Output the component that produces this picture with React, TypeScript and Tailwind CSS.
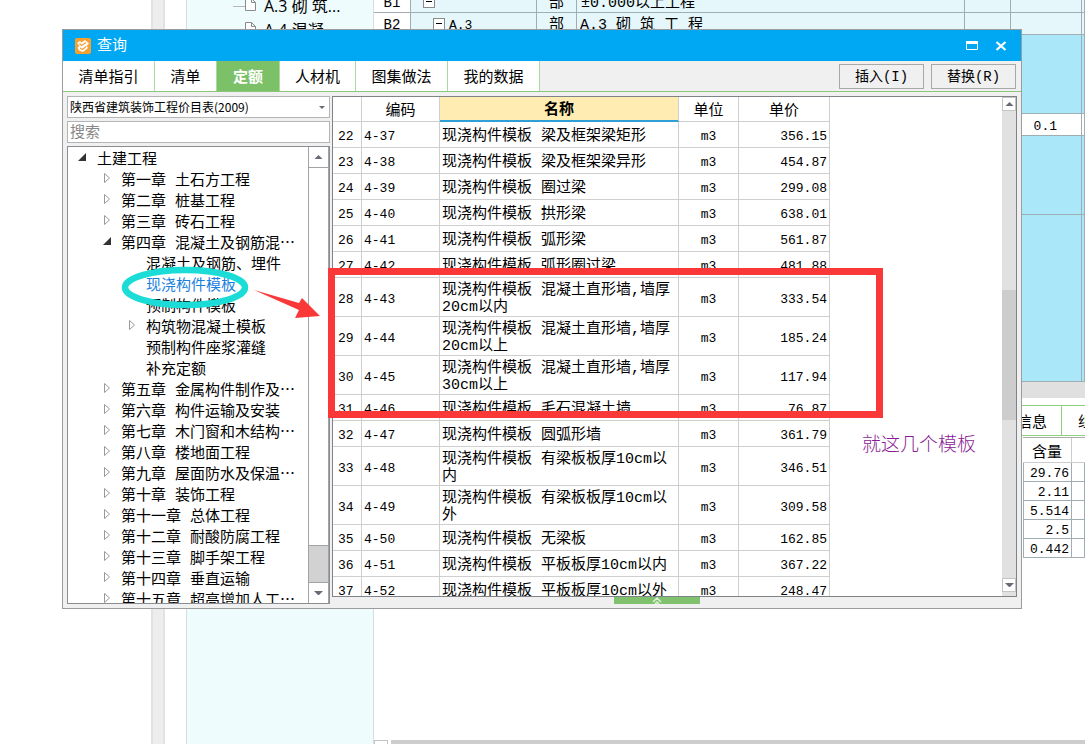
import { ReactNode } from 'react';
import { clsx } from 'clsx';

type NodeState = 'open' | 'closed' | 'leaf';

interface TreeNode {
  label: string;
  level: number;
  state: NodeState;
  active?: boolean;
}

interface QuotaRow {
  no: number;
  code: string;
  name: string;
  price: string;
  tall?: boolean;
}

const tabs = ['清单指引', '清单', '定额', '人材机', '图集做法', '我的数据'];

const tree: TreeNode[] = [
  { label: '土建工程', level: 0, state: 'open' },
  { label: '第一章 土石方工程', level: 1, state: 'closed' },
  { label: '第二章 桩基工程', level: 1, state: 'closed' },
  { label: '第三章 砖石工程', level: 1, state: 'closed' },
  { label: '第四章 混凝土及钢筋混⋯', level: 1, state: 'open' },
  { label: '混凝土及钢筋、埋件', level: 2, state: 'leaf' },
  { label: '现浇构件模板', level: 2, state: 'leaf', active: true },
  { label: '预制构件模板', level: 2, state: 'leaf' },
  { label: '构筑物混凝土模板', level: 2, state: 'closed' },
  { label: '预制构件座浆灌缝', level: 2, state: 'leaf' },
  { label: '补充定额', level: 2, state: 'leaf' },
  { label: '第五章 金属构件制作及⋯', level: 1, state: 'closed' },
  { label: '第六章 构件运输及安装', level: 1, state: 'closed' },
  { label: '第七章 木门窗和木结构⋯', level: 1, state: 'closed' },
  { label: '第八章 楼地面工程', level: 1, state: 'closed' },
  { label: '第九章 屋面防水及保温⋯', level: 1, state: 'closed' },
  { label: '第十章 装饰工程', level: 1, state: 'closed' },
  { label: '第十一章 总体工程', level: 1, state: 'closed' },
  { label: '第十二章 耐酸防腐工程', level: 1, state: 'closed' },
  { label: '第十三章 脚手架工程', level: 1, state: 'closed' },
  { label: '第十四章 垂直运输', level: 1, state: 'closed' },
  { label: '第十五章 超高增加人工⋯', level: 1, state: 'closed' },
];

const rows: QuotaRow[] = [
  { no: 22, code: '4-37', name: '现浇构件模板 梁及框架梁矩形', price: '356.15' },
  { no: 23, code: '4-38', name: '现浇构件模板 梁及框架梁异形', price: '454.87' },
  { no: 24, code: '4-39', name: '现浇构件模板 圈过梁', price: '299.08' },
  { no: 25, code: '4-40', name: '现浇构件模板 拱形梁', price: '638.01' },
  { no: 26, code: '4-41', name: '现浇构件模板 弧形梁', price: '561.87' },
  { no: 27, code: '4-42', name: '现浇构件模板 弧形圈过梁', price: '481.88' },
  { no: 28, code: '4-43', name: '现浇构件模板 混凝土直形墙,墙厚20cm以内', price: '333.54', tall: true },
  { no: 29, code: '4-44', name: '现浇构件模板 混凝土直形墙,墙厚20cm以上', price: '185.24', tall: true },
  { no: 30, code: '4-45', name: '现浇构件模板 混凝土直形墙,墙厚30cm以上', price: '117.94', tall: true },
  { no: 31, code: '4-46', name: '现浇构件模板 毛石混凝土墙', price: '76.87' },
  { no: 32, code: '4-47', name: '现浇构件模板 圆弧形墙', price: '361.79' },
  { no: 33, code: '4-48', name: '现浇构件模板 有梁板板厚10cm以内', price: '346.51', tall: true },
  { no: 34, code: '4-49', name: '现浇构件模板 有梁板板厚10cm以外', price: '309.58', tall: true },
  { no: 35, code: '4-50', name: '现浇构件模板 无梁板', price: '162.85' },
  { no: 36, code: '4-51', name: '现浇构件模板 平板板厚10cm以内', price: '367.22' },
  { no: 37, code: '4-52', name: '现浇构件模板 平板板厚10cm以外', price: '248.47' },
];

const contents = ['29.76', '2.11', '5.514', '2.5', '0.442'];

const Triangle = ({ up, small }: { up?: boolean; small?: boolean }) => (
  <svg viewBox="0 0 10 5" className={small ? 'w-[6px]' : 'w-[9px]'}>
    <path d={up ? 'M0 5 5 0l5 5z' : 'M0 0h10L5 5z'} fill="#666b75" />
  </svg>
);

const Expander = ({ state }: { state: NodeState }) => (
  <svg viewBox="0 0 10 10" className="mb-[4px] w-[10px] h-[10px] shrink-0">
    {state === 'open' && <path d="M9 1v8H1z" fill="#333" />}
    {state === 'closed' && <path d="M2.500.5v9l5-4.500z" fill="none" stroke="#999" />}
  </svg>
);

const MinusBox = () => (
  <span className="flex w-[12px] h-[12px] items-center justify-center border border-[#8a8a8a] bg-white">
    <span className="w-[6px] h-px bg-black" />
  </span>
);

const FileNode = ({ label }: { label: string }) => (
  <div className="flex h-[24px] items-center pl-[46px]">
    <span className="w-[12px] h-px bg-[#b8b8b8]" />
    <svg viewBox="0 0 11 13" className="mb-[4px] w-[11px] h-[13px]">
      <path d="M.5.5h6l4 4v8H.5zM6.500.5v4h4" fill="#fff" stroke="#8a8a8a" />
    </svg>
    <span className="pl-[8px] text-[16px] whitespace-nowrap font-['Open_Sans','Noto_Sans_CJK_SC',sans-serif]">{label}</span>
  </div>
);

const Cell = ({ children, className }: { children?: ReactNode; className?: string }) => (
  <td className={clsx('border-r border-b border-[#a0adb3] py-0', className)}>{children}</td>
);

const Workspace = () => (
  <div className="flex h-full">
    <div className="w-[151px] shrink-0" />
    <div className="w-[14px] shrink-0 border-x-2 border-[#e2e2e2] bg-[#ededed]" />
    <div className="w-[21px] shrink-0" />
    <div className="w-[188px] shrink-0 overflow-hidden border-x border-[#d5dfe2] bg-[#effcfe]">
      <div className="-mt-[6px]">
        <FileNode label="A.3 砌 筑..." />
        <FileNode label="A.4 混凝..." />
      </div>
    </div>
    <div className="flex min-w-0 flex-1 flex-col overflow-hidden">
      <table className="-mt-[9px] w-full shrink-0 table-fixed border-separate border-spacing-0 bg-[#e5f7fb] leading-[17px]">
        <colgroup>
          <col className="w-[37px]" />
          <col className="w-[126px]" />
          <col className="w-[40px]" />
          <col />
          <col className="w-[46px]" />
          <col className="w-[71px]" />
          <col className="w-[3px]" />
        </colgroup>
        <tbody>
          <tr className="h-[22px]">
            <Cell className="bg-white pt-[4px] text-center text-[14px]">B1</Cell>
            <Cell className="pl-[12px]"><MinusBox /></Cell>
            <Cell className="pt-[4px] text-center">部</Cell>
            <Cell className="pt-[4px] pl-[4px]">±0.000以上工程</Cell>
            <Cell /><Cell /><Cell />
          </tr>
          <tr className="h-[22px]">
            <Cell className="bg-white pt-[4px] text-center text-[14px]">B2</Cell>
            <Cell className="pl-[22px]">
              <div className="flex items-center gap-[4px] text-[13px]">
                <MinusBox />
                <span className="pt-[4px]">A.3</span>
              </div>
            </Cell>
            <Cell className="pt-[4px] text-center">部</Cell>
            <Cell className="pt-[4px] pl-[3px] text-[15px]">A.3 砌 筑 工 程</Cell>
            <Cell /><Cell /><Cell />
          </tr>
          <tr className="h-[79px] bg-[#aae7f9]">
            <Cell /><Cell /><Cell /><Cell /><Cell /><Cell /><Cell />
          </tr>
          <tr className="h-[22px] bg-white">
            <Cell /><Cell /><Cell /><Cell /><Cell />
            <Cell className="pt-[4px] pr-[24px] text-right text-[13px]">0.1</Cell>
            <Cell />
          </tr>
          <tr className="h-[79px] bg-[#aae7f9]">
            <Cell /><Cell /><Cell /><Cell /><Cell /><Cell /><Cell />
          </tr>
          <tr className="h-[167px] bg-[#aae7f9]">
            <Cell /><Cell /><Cell /><Cell /><Cell /><Cell /><Cell />
          </tr>
        </tbody>
      </table>
      <div className="h-[16px] shrink-0 bg-[#e0e0e0]" />
      <div className="mt-[7px] flex shrink-0 justify-end">
        <div className="flex h-[31px] w-[85px] items-stretch overflow-hidden border-y border-[#8fcf80] whitespace-nowrap">
          <span className="flex w-[62px] shrink-0 items-center justify-end border-r border-[#8fcf80] pt-[6px] pr-[14px]">信息</span>
          <span className="flex items-center pt-[6px] pl-[16px]">组价</span>
        </div>
      </div>
      <div className="mt-px flex flex-1 justify-end">
        <table className="w-[62px] table-fixed border-separate border-spacing-0 self-start border-t border-[#aaa]">
          <thead>
            <tr className="h-[25px] leading-[17px]">
              <th className="w-[49px] border-r border-b border-[#ccc] px-0 pt-[6px] pb-0 font-normal">含量</th>
              <th className="border-b border-[#ccc] p-0" />
            </tr>
          </thead>
          <tbody>
            {contents.map((value) => (
              <tr key={value} className="h-[19px] text-[13px] leading-[14px]">
                <Cell className="border-l pt-[4px] pr-[2px] pl-0 text-right">{value}</Cell>
                <Cell />
              </tr>
            ))}
          </tbody>
        </table>
      </div>
      <div className="flex h-[4px] shrink-0 gap-[3px]">
        <div className="w-[14px] border border-b-0 border-[#c4c4c4] bg-white" />
        <div className="flex-1 bg-[#cdcdcd]" />
      </div>
    </div>
  </div>
);

const TitleBar = () => (
  <div className="flex h-[31px] shrink-0 items-center bg-[#00a8f3] pr-[14px] pl-[12px] text-white">
    <svg viewBox="0 0 16 16" className="w-[16px] h-[16px]">
      <rect width="16" height="16" rx="2" fill="#f6a030" />
      <path d="M2 5 5 3l1.500 1.500L10 2l4 3.500-2.500 2.500 1.500 2-5 4-4-1.500L2.500 9.500 4.500 8z" fill="#fff" />
      <path d="M4.500 5.500 6.500 7.500 11 4.500M5 10 7.500 11.500l3.500-3" fill="none" stroke="#f6a030" strokeWidth="1.200" />
    </svg>
    <h1 className="flex-1 pt-[2px] pl-[6px]">查询</h1>
    <button aria-label="最大化" className="mr-[17px]">
      <svg viewBox="0 0 12 9" className="w-[12px] h-[9px]">
        <path d="M.5.5h11v8H.5z" fill="none" stroke="#fff" />
        <path d="M0 0h12v3H0z" fill="#fff" />
      </svg>
    </button>
    <button aria-label="关闭">
      <svg viewBox="0 0 12 10" className="w-[12px] h-[10px]">
        <path d="M1.500 1l9 8M10.500 1l-9 8" stroke="#fff" strokeWidth="2.200" />
      </svg>
    </button>
  </div>
);

const TabBar = () => (
  <div className="flex h-[31px] shrink-0 items-stretch border-b border-[#8cc57c]">
    <nav className="flex flex-1">
      {tabs.map((tab) => (
        <button
          key={tab}
          className={clsx(
            'border-r border-[#a9dba0] pt-[6px]',
            tab === '定额' ? 'bg-[#7cc068] font-bold text-white' : 'bg-white',
            tab.length === 2 && (tab === '定额' ? 'w-[63px]' : 'w-[62px]'),
            tab.length === 3 && 'w-[76px]',
            tab.length === 4 && 'w-[92px]'
          )}
        >
          {tab}
        </button>
      ))}
    </nav>
    <div className="flex items-center gap-[7px] pr-[5px] text-[14px]">
      <button className="h-[25px] w-[85px] border border-[#a8a8a8] pt-[2px]">插入(I)</button>
      <button className="h-[25px] w-[85px] border border-[#a8a8a8] pt-[2px]">替换(R)</button>
    </div>
  </div>
);

const Sidebar = () => (
  <aside className="flex w-[263px] shrink-0 flex-col">
    <div className="grid h-[22px] shrink-0 grid-cols-1 items-center border border-[#b5b5b5] bg-white">
      <select
        aria-label="定额库"
        className="col-start-1 row-start-1 w-full appearance-none pl-[2px] text-[12px] leading-[18px] font-['Noto_Sans_CJK_SC',sans-serif]"
      >
        <option>陕西省建筑装饰工程价目表(2009)</option>
      </select>
      <span className="pointer-events-none col-start-1 row-start-1 justify-self-end pr-[4px]"><Triangle small /></span>
    </div>
    <input
      aria-label="搜索"
      placeholder="搜索"
      className="mt-[3px] h-[22px] shrink-0 border border-[#b5b5b5] bg-white px-[2px] pt-[2px] placeholder:text-[#888]"
    />
    <div className="mt-[3px] flex min-h-0 flex-1 border border-[#8a8d92] bg-white">
      <ul className="min-w-0 flex-1 overflow-hidden pt-px">
        {tree.map((node) => (
          <li
            key={node.label}
            className={clsx(
              'flex h-[21px] items-center whitespace-nowrap leading-[17px]',
              node.level === 0 && 'gap-[10px] pl-[9px]',
              node.level === 1 && 'gap-[9px] pl-[34px]',
              node.level === 2 && 'gap-[9px] pl-[59px]',
              node.active && 'text-[#1a80e0]'
            )}
          >
            <Expander state={node.state} />
            <span className="pt-[4px]">{node.label}</span>
          </li>
        ))}
      </ul>
      <div className="flex w-[21px] shrink-0 flex-col border-x border-[#a0a3a8] bg-[#d2d2d2]">
        <button aria-label="向上" className="flex h-[21px] items-center justify-center border-b border-[#a0a3a8] bg-white"><Triangle up /></button>
        <div className="flex-1 border-b border-[#a0a3a8] bg-white" />
        <button aria-label="向下" className="mt-[36px] flex h-[21px] items-center justify-center border-t border-[#a0a3a8] bg-white"><Triangle /></button>
      </div>
    </div>
  </aside>
);

const cell = 'border-r border-b border-[#cfcfcf] px-[2px] pt-[4px] pb-0';

const QuotaTable = () => (
  <div className="flex min-h-0 flex-1 overflow-hidden border border-[#7f8388] bg-white">
    <div className="min-w-0 flex-1 overflow-hidden">
      <table className="w-[497px] table-fixed border-separate border-spacing-0">
        <colgroup>
          <col className="w-[29px]" />
          <col className="w-[78px]" />
          <col className="w-[239px]" />
          <col className="w-[60px]" />
          <col className="w-[91px]" />
        </colgroup>
        <thead>
          <tr className="h-[25px] leading-[17px]">
            <th className={cell} />
            <th className={clsx(cell, 'font-normal')}>编码</th>
            <th className="border-r border-b-2 border-r-[#cfcfcf] border-b-[#2f9fd8] bg-[#ffecb3] px-[2px] pt-[4px] pb-0 font-bold">名称</th>
            <th className={clsx(cell, 'font-normal')}>单位</th>
            <th className={clsx(cell, 'font-normal')}>单价</th>
          </tr>
        </thead>
        <tbody>
          {rows.map((row) => (
            <tr key={row.no} className={clsx('text-[13px] leading-[17px]', row.tall ? 'h-[39px]' : 'h-[26px]')}>
              <td className={clsx(cell, 'pl-[5px]')}>{row.no}</td>
              <td className={cell}>{row.code}</td>
              <td className={clsx(cell, 'text-[15px] leading-[17px]')}>{row.name}</td>
              <td className={clsx(cell, 'text-center')}>m3</td>
              <td className={clsx(cell, 'text-right')}>{row.price}</td>
            </tr>
          ))}
        </tbody>
      </table>
    </div>
    <div className="flex w-[14px] shrink-0 flex-col bg-[#e1e1e1]">
      <button aria-label="向上" className="flex h-[14px] items-center justify-center border border-[#c4c4c4] bg-white"><Triangle up /></button>
      <div className="mt-[179px] h-[130px] bg-[#cdcdcd]" />
      <button aria-label="向下" className="mt-auto mb-[4px] flex h-[14px] items-center justify-center border border-[#c4c4c4] bg-white"><Triangle /></button>
    </div>
  </div>
);

const QueryWindow = () => (
  <section className="absolute top-[29px] right-[63px] bottom-[135px] left-[62px] flex flex-col border border-[#9c9c9c] bg-[#f0f0f0]">
    <TitleBar />
    <TabBar />
    <div className="flex min-h-0 flex-1 gap-[2px] pt-[4px] pr-[4px] pl-[4px]">
      <div className="flex pb-[4px]">
        <Sidebar />
      </div>
      <div className="flex min-w-0 flex-1 flex-col">
        <QuotaTable />
        <button aria-label="展开" className="mb-[4px] ml-[282px] flex h-[7px] w-[86px] items-center justify-center bg-[#7fc16c]">
          <svg viewBox="0 0 10 7" className="w-[10px] h-[7px]">
            <path d="M1 5l4-4 4 4M3 7l2-2 2 2" fill="none" stroke="#dff3d8" strokeWidth="1.500" />
          </svg>
        </button>
      </div>
    </div>
  </section>
);

// Hand-drawn marks laid over the window
const Annotations = () => (
  <>
    <svg viewBox="0 0 210 60" className="pointer-events-none absolute top-[262px] left-[118px] w-[210px] h-[60px]">
      <ellipse cx="67" cy="25.500" rx="60" ry="17.500" fill="none" stroke="#1bdcd6" strokeWidth="6.500" />
      <path d="M136 28 181 41 184 36 202 54 177 56 181 48z" fill="#fb3838" />
    </svg>
    <div className="pointer-events-none absolute top-[268px] left-[328px] h-[150px] w-[555px] border-[7px] border-[#fb3838]" />
    <p className="absolute top-[433px] left-[862px] text-[19px] leading-[26px] font-light text-[#8a1a94]">就这几个模板</p>
  </>
);

const App = () => (
  <main className="relative h-screen overflow-hidden bg-white text-[15px] leading-[20px] text-black font-['Liberation_Mono','Noto_Sans_CJK_SC',monospace]">
    <Workspace />
    <QueryWindow />
    <Annotations />
  </main>
);

export default App;
